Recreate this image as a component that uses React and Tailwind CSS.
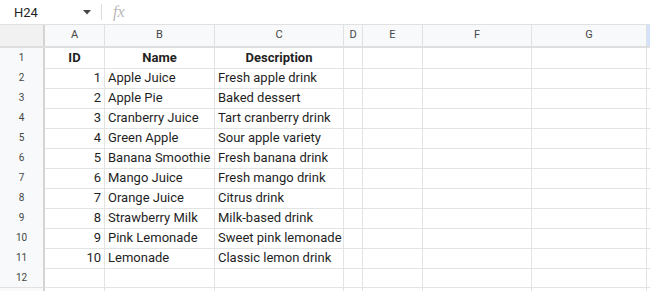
import React from "react";

const rows = [
  ["ID", "Name", "Description"],
  ["1", "Apple Juice", "Fresh apple drink"],
  ["2", "Apple Pie", "Baked dessert"],
  ["3", "Cranberry Juice", "Tart cranberry drink"],
  ["4", "Green Apple", "Sour apple variety"],
  ["5", "Banana Smoothie", "Fresh banana drink"],
  ["6", "Mango Juice", "Fresh mango drink"],
  ["7", "Orange Juice", "Citrus drink"],
  ["8", "Strawberry Milk", "Milk-based drink"],
  ["9", "Pink Lemonade", "Sweet pink lemonade"],
  ["10", "Lemonade", "Classic lemon drink"],
  ["", "", ""],
  ["", "", ""],
];

const cols = ["A", "B", "C", "D", "E", "F", "G"];
const gridCls =
  "grid grid-cols-[45px_60px_110px_129px_19px_60px_109px_115px_1fr]";

export default function App() {
  return (
    <div
      className="w-[650px] h-[291px] overflow-hidden bg-white text-[#1f1f1f]"
      style={{ fontFamily: "Roboto, 'Liberation Sans', Arial, sans-serif" }}
    >
      {/* formula bar */}
      <div className="h-[25px] flex items-center border-b border-[#e1e1e1] bg-white">
        <div className="w-[80px] pl-[14px] text-[13px] leading-none">H24</div>
        <svg width="8" height="5" viewBox="0 0 8 5" className="ml-[3px]">
          <path d="M0 0 L8 0 L4 4.5 Z" fill="#444746" />
        </svg>
        <div className="ml-[10px] w-px h-[16px] bg-[#dadce0]" />
        <div
          className="ml-[11px] text-[16px] italic text-[#b8b8b8] leading-none"
          style={{ fontFamily: "'Liberation Serif', 'DejaVu Serif', serif" }}
        >
          fx
        </div>
      </div>
      {/* column header row */}
      <div className={`${gridCls} h-[23px] border-b-2 border-[#dedede] bg-[#f8f9fa]`}>
        <div className="bg-[#f1f1f1] border-r-2 border-[#d4d4d4]" />
        {cols.map((c) => (
          <div
            key={c}
            className="border-r border-[#e1e1e1] flex items-center justify-center text-[11px] text-[#444746]"
          >
            {c}
          </div>
        ))}
        <div className="bg-[#d3e3fd]" />
      </div>
      {/* data rows */}
      {rows.map((r, i) => (
        <div key={i} className={`${gridCls} h-[20px]`}>
          <div className="bg-[#f8f9fa] border-r-2 border-b border-r-[#d4d4d4] border-b-[#e1e1e1] flex items-center justify-center text-[10px] text-[#444746]">
            {i < 12 ? i + 1 : ""}
          </div>
          <div
            className={`border-r border-b border-[#e2e3e3] flex items-center px-[3px] text-[13px] ${
              i === 0 ? "justify-center font-bold" : "justify-end"
            }`}
          >
            {r[0]}
          </div>
          <div
            className={`border-r border-b border-[#e2e3e3] flex items-center px-[3px] text-[13px] whitespace-nowrap ${
              i === 0 ? "justify-center font-bold" : ""
            }`}
          >
            {r[1]}
          </div>
          <div
            className={`border-r border-b border-[#e2e3e3] flex items-center px-[3px] text-[13px] whitespace-nowrap ${
              i === 0 ? "justify-center font-bold" : ""
            }`}
          >
            {r[2]}
          </div>
          <div className="border-r border-b border-[#e2e3e3]" />
          <div className="border-r border-b border-[#e2e3e3]" />
          <div className="border-r border-b border-[#e2e3e3]" />
          <div className="border-r border-b border-[#e2e3e3]" />
          <div className="border-b border-[#e2e3e3]" />
        </div>
      ))}
    </div>
  );
}
